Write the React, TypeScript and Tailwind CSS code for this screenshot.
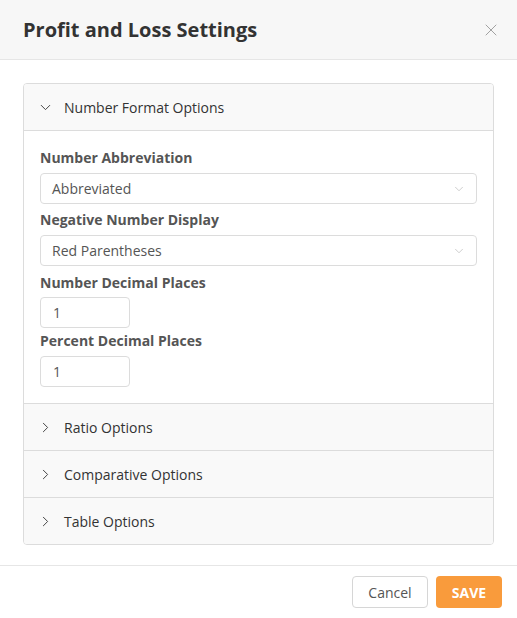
import { ChevronDown, ChevronRight, X } from "lucide-react";

const SECTIONS = ["Ratio Options", "Comparative Options", "Table Options"];

function SelectBox({ value }: { value: string }) {
  return (
    <div className="flex h-[31px] items-center justify-between rounded-[4px] border border-[#dcdcdc] bg-white pl-[11px] pr-[10px] text-[14px] text-[#555]">
      <span>{value}</span>
      <ChevronDown size={14} strokeWidth={1} className="text-[#aaa]" />
    </div>
  );
}

function NumberBox({ value }: { value: string }) {
  return (
    <div className="flex h-[31px] w-[90px] items-center rounded-[4px] border border-[#dcdcdc] bg-white pl-[12px] text-[14px] text-[#555]">
      {value}
    </div>
  );
}

export default function App() {
  return (
    <div className="flex h-[618px] w-[517px] flex-col bg-white font-['Open_Sans',sans-serif]">
      {/* header */}
      <div className="flex h-[60px] items-center justify-between border-b border-[#e6e6e6] bg-[#f7f7f7] pl-[23px] pr-[16px]">
        <h1 className="text-[20px] font-bold text-[#333]">Profit and Loss Settings</h1>
        <X size={20} strokeWidth={1.1} className="text-[#999]" />
      </div>

      {/* body */}
      <div className="flex-1 px-[23px] pt-[23px]">
        <div className="overflow-hidden rounded-[4px] border border-[#dcdcdc]">
          <div className="flex h-[46px] items-center gap-[10px] bg-[#f9f9f9] pl-[13px] text-[14px] text-[#333]">
            <ChevronDown size={17} strokeWidth={1.4} className="text-[#444]" />
            <span>Number Format Options</span>
          </div>
          <div className="border-t border-[#dcdcdc] bg-white px-[16px] pt-[17px] pb-[16px]">
            <div className="flex flex-col">
              <label className="mb-[5px] text-[14px] font-bold leading-[20px] text-[#555]">Number Abbreviation</label>
              <SelectBox value="Abbreviated" />
              <label className="mt-[6px] mb-[5px] text-[14px] font-bold leading-[20px] text-[#555]">Negative Number Display</label>
              <SelectBox value="Red Parentheses" />
              <label className="mt-[7px] mb-[4px] text-[14px] font-bold leading-[20px] text-[#555]">Number Decimal Places</label>
              <NumberBox value="1" />
              <label className="mt-[3px] mb-[5px] text-[14px] font-bold leading-[20px] text-[#555]">Percent Decimal Places</label>
              <NumberBox value="1" />
            </div>
          </div>
          {SECTIONS.map((s) => (
            <div
              key={s}
              className="flex h-[47px] items-center gap-[10px] border-t border-[#dcdcdc] bg-[#f9f9f9] pl-[13px] text-[14px] text-[#333]"
            >
              <ChevronRight size={17} strokeWidth={1.4} className="text-[#444]" />
              <span>{s}</span>
            </div>
          ))}
        </div>
      </div>

      {/* footer */}
      <div className="flex h-[53px] items-start justify-end gap-[8px] border-t border-[#e6e6e6] pr-[15px] pt-[10px]">
        <button className="h-[32px] w-[76px] rounded-[4px] border border-[#d6d6d6] bg-white text-[14px] text-[#555]">
          Cancel
        </button>
        <button className="h-[32px] w-[66px] rounded-[4px] bg-[#f99b3c] text-[14px] font-bold text-white">
          SAVE
        </button>
      </div>
    </div>
  );
}
